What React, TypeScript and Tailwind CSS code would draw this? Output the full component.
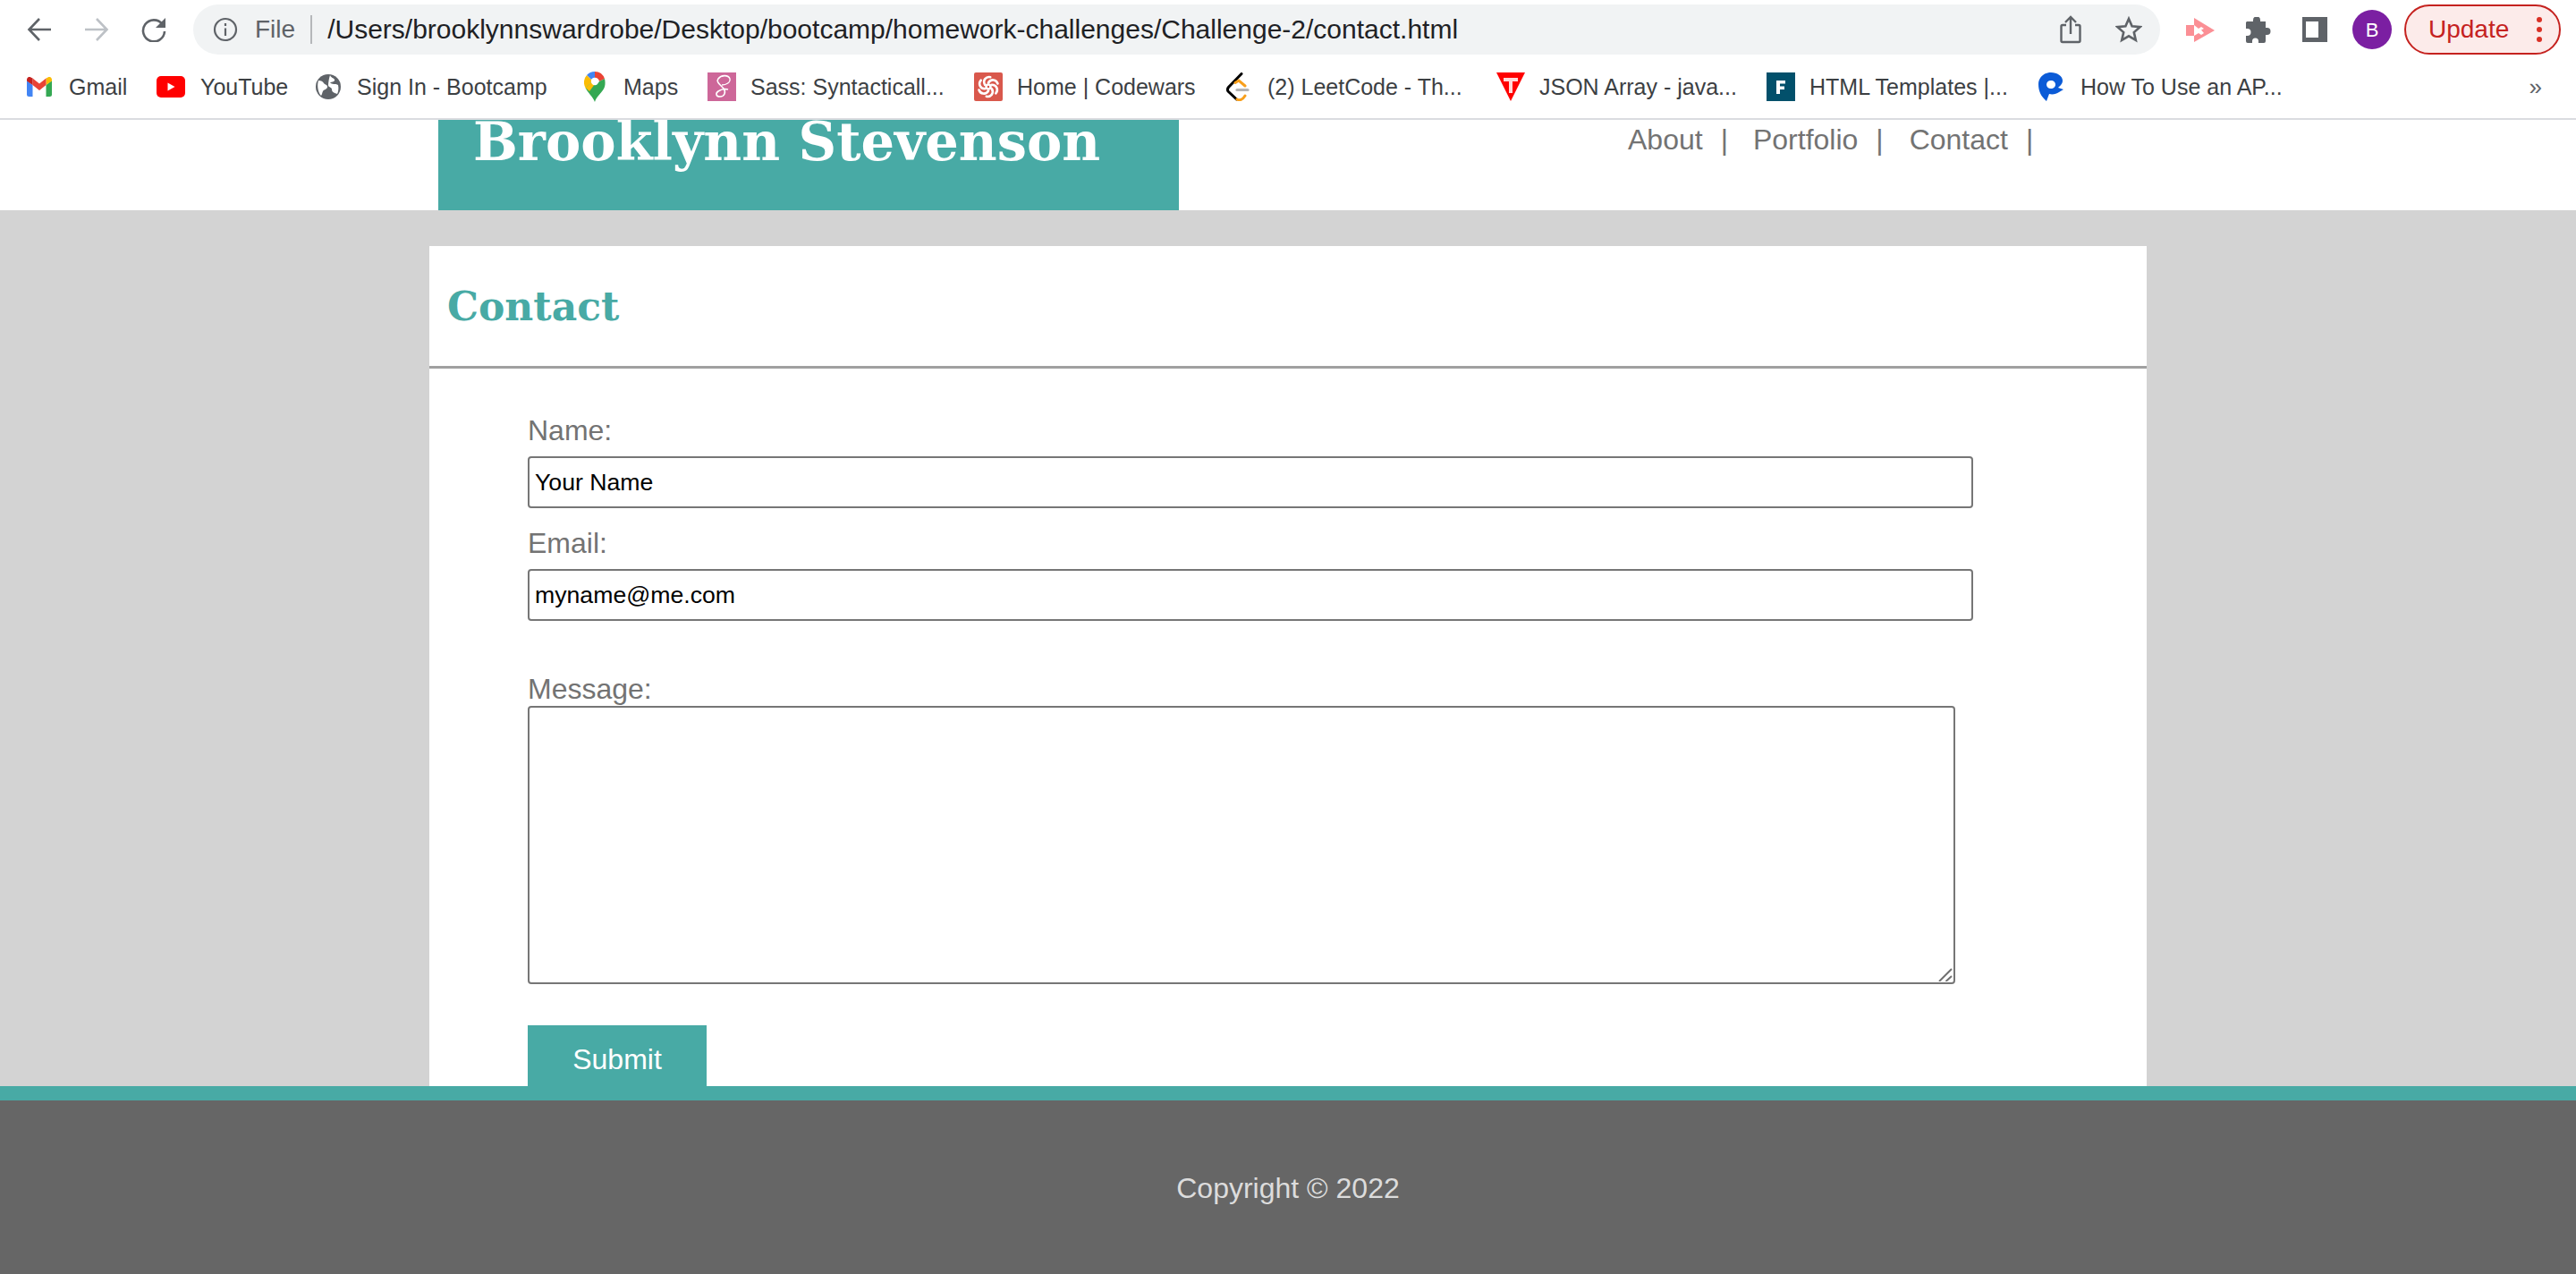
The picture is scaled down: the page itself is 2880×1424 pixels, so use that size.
import React from 'react'

const sans = 'font-["Liberation_Sans",Arial,sans-serif]'

const GmailIcon = () => (
  <svg viewBox="0 0 28 22" className="w-[28px] h-[22px]">
    <path d="M0 4v15.500A2.500 2.500 0 0 0 2.500 22H6.500V9z" fill="#4285f4" />
    <path d="M28 4v15.500a2.500 2.500 0 0 1-2.500 2.500H21.500V9z" fill="#34a853" />
    <path d="M21.500 1.500V9L28 4.500V3c0-2.500-2.800-3.800-4.500-2.600z" fill="#fbbc04" />
    <path d="M6.500 9V1.500L14 7.500l7.500-6V9L14 15z" fill="#ea4335" />
    <path d="M0 3v1.500L6.500 9V1.500L4.500.4C2.800-.8 0 .5 0 3z" fill="#c5221f" />
  </svg>
)

const YoutubeIcon = () => (
  <svg viewBox="0 0 32 24" className="w-[32px] h-[24px]">
    <rect width="32" height="24" rx="5" fill="#ff0000" />
    <path d="M12.500 7.500v9l8-4.500z" fill="#fff" />
  </svg>
)

const GlobeIcon = () => (
  <svg viewBox="0 0 28 28" className="w-[28px] h-[28px]">
    <circle cx="14" cy="14" r="14" fill="#5f6368" />
    <path d="M3 7c3 0 5 1 6 3s4 1 4 4-4 3-5 5-1 4-2 5C3 21 1 13 3 7zM16 1c1 3 4 3 5 5s-3 3-5 3c2 3 6 1 9 3 1 4 0 8-1 10-3-1-6-2-6-5s-4-2-4-5 1-8 2-11z" fill="#fff" />
  </svg>
)

const MapsIcon = () => (
  <svg viewBox="0 0 24 34" className="w-[24px] h-[34px]">
    <path d="M12 0a12 12 0 0 0-9 4l5 5a5 5 0 0 1 4-2z" fill="#4285f4" />
    <path d="M12 0a12 12 0 0 1 11 8l-6 3a5 5 0 0 0-5-4z" fill="#ea4335" />
    <path d="M3 4A12 12 0 0 0 1.500 18l7-6a5 5 0 0 1-.5-3z" fill="#fbbc04" />
    <path d="M1.500 18c2.500 6 8 9 10.500 16 2-7 9-11 11-17 1-3 .5-7 0-9l-6 3a5 5 0 0 1-8.500 1z" fill="#34a853" />
    <path d="M1.500 18 8.500 12c1 1.500 2 2 3.500 2L6 22z" fill="#fbbc04" />
    <circle cx="12" cy="11" r="4.200" fill="#fff" />
  </svg>
)

const SassIcon = () => (
  <svg viewBox="0 0 32 32" className="w-[32px] h-[32px]">
    <rect width="32" height="32" fill="#cd6799" />
    <path d="M25 7c-2-5-10-4-13 0s3 7 6 11 1 9-4 9-5-4-2-6 8-3 11-2" fill="none" stroke="#fff" strokeWidth="1.600" />
    <path d="M25 7c1 4-4 7-9 7" fill="none" stroke="#fff" strokeWidth="1.300" />
  </svg>
)

const swirl = [0, 60, 120, 180, 240, 300]

const CodewarsIcon = () => (
  <svg viewBox="0 0 32 32" className="w-[32px] h-[32px]">
    <rect width="32" height="32" rx="2" fill="#d9584c" />
    <g fill="none" stroke="#fff" strokeWidth="2.600" strokeLinecap="round">
      <circle cx="16" cy="16" r="2.500" />
      {swirl.map((deg) => (
        <path key={deg} d="M16 11.500C19 6.500 25 8 26.500 12.500" transform={`rotate(${deg} 16 16)`} />
      ))}
    </g>
  </svg>
)

const LeetIcon = () => (
  <svg viewBox="0 0 26 32" className="w-[26px] h-[32px]">
    <path d="M17 1.500 2.500 16.500c-1.500 2-1.500 3.500 0 5l9 8.500" fill="none" stroke="#000" strokeWidth="3" strokeLinecap="round" />
    <path d="M10 11.500 14 9l7 6M12 30c3 1.500 6 1 9-4" fill="none" stroke="#f89f1b" strokeWidth="3" strokeLinecap="round" />
    <path d="M12 19.500h12" stroke="#b3b3b3" strokeWidth="3.200" strokeLinecap="round" />
  </svg>
)

const TriangleIcon = () => (
  <svg viewBox="0 0 32 32" className="w-[32px] h-[32px]">
    <path d="M0 0h32L16 32z" fill="#ff0000" />
    <path d="M8 6h16v4h-6v13h-4V10H8z" fill="#fff" opacity=".85" />
  </svg>
)

const FIcon = () => (
  <svg viewBox="0 0 32 32" className="w-[32px] h-[32px]">
    <rect width="32" height="32" fill="#02506b" />
    <path d="M11 9h10v3.500h-6v3h5V19h-5v5h-4z" fill="#fff" />
  </svg>
)

const QIcon = () => (
  <svg viewBox="0 0 28 32" className="w-[28px] h-[32px]">
    <path d="M14 0C6 0 0 6 0 13c0 8 3 14 9 19l3-8c4 1 8 0 11-2l5-3-6-2c2-2 5-4 5-8C27 4 21 0 14 0zm0 9c3 0 5 2 5 4.500S17 18 14 18s-5-2-5-4.500S11 9 14 9z" fill="#0b5bd7" />
  </svg>
)

const bookmarks = [
  { label: 'Gmail', icon: <GmailIcon />, box: 'w-[28px] ml-[30px]', text: 'w-[62px] ml-[19px]' },
  { label: 'YouTube', icon: <YoutubeIcon />, box: 'w-[32px] ml-[36px]', text: 'w-[93px] ml-[17px]' },
  { label: 'Sign In - Bootcamp', icon: <GlobeIcon />, box: 'w-[28px] ml-[36px]', text: 'w-[216px] ml-[18px]' },
  { label: 'Maps', icon: <MapsIcon />, box: 'w-[24px] ml-[38px]', text: 'w-[61px] ml-[20px]' },
  { label: 'Sass: Syntacticall...', icon: <SassIcon />, box: 'w-[32px] ml-[33px]', text: 'w-[218px] ml-[16px]' },
  { label: 'Home | Codewars', icon: <CodewarsIcon />, box: 'w-[32px] ml-[32px]', text: 'w-[199px] ml-[16px]' },
  { label: '(2) LeetCode - Th...', icon: <LeetIcon />, box: 'w-[26px] ml-[35px]', text: 'w-[222px] ml-[20px]' },
  { label: 'JSON Array - java...', icon: <TriangleIcon />, box: 'w-[32px] ml-[34px]', text: 'w-[220px] ml-[16px]' },
  { label: 'HTML Templates |...', icon: <FIcon />, box: 'w-[32px] ml-[34px]', text: 'w-[222px] ml-[16px]' },
  { label: 'How To Use an AP...', icon: <QIcon />, box: 'w-[28px] ml-[34px]', text: 'w-[223px] ml-[19px]' },
]

const BrowserChrome = () => (
  <div className={`${sans} bg-white border-b-2 border-[#dadce0]`}>
    <div className="h-[66px] flex items-center">
      <svg viewBox="0 0 28 28" className="w-[28px] h-[28px] ml-[30px]" fill="none" stroke="#5f6368" strokeWidth="2.600">
        <path d="M27 14H3M14 2 2.500 14 14 26" />
      </svg>
      <svg viewBox="0 0 28 28" className="w-[28px] h-[28px] ml-[36px]" fill="none" stroke="#bdc1c6" strokeWidth="2.600">
        <path d="M1 14h24M14 2l11.500 12L14 26" />
      </svg>
      <svg viewBox="0 0 28 28" className="w-[28px] h-[28px] ml-[36px]" fill="none">
        <path d="M23.500 8A12 12 0 1 0 26 16" stroke="#5f6368" strokeWidth="2.600" />
        <path d="M27 1v11H16z" fill="#5f6368" />
      </svg>
      <div className="ml-[30px] w-[2199px] h-[56px] rounded-full bg-[#f1f3f4] flex items-center">
        <svg viewBox="0 0 28 28" className="w-[28px] h-[28px] ml-[22px]" fill="none" stroke="#5f6368" strokeWidth="2.200">
          <circle cx="14" cy="14" r="12" />
          <path d="M14 12.500V21M14 7v3" />
        </svg>
        <span className="ml-[19px] text-[28px] leading-none text-[#5f6368]">File</span>
        <span className="ml-[17px] w-[2px] h-[32px] bg-[#b5b7ba]" />
        <span className="ml-[17px] text-[30px] leading-none text-[#202124]">
          /Users/brooklynnswardrobe/Desktop/bootcamp/homework-challenges/Challenge-2/contact.html
        </span>
        <svg viewBox="0 0 24 32" className="w-[24px] h-[32px] ml-auto" fill="none" stroke="#5f6368" strokeWidth="2.400">
          <path d="M7 11H3a1.500 1.500 0 0 0-1.500 1.500v16A1.500 1.500 0 0 0 3 30h18a1.500 1.500 0 0 0 1.500-1.500v-16A1.500 1.500 0 0 0 21 11h-4M12 21V2M6 8l6-6 6 6" />
        </svg>
        <svg viewBox="0 0 30 30" className="w-[30px] h-[30px] ml-[38px] mr-[20px]" fill="none" stroke="#5f6368" strokeWidth="2.600">
          <path d="m15 3 3.600 8.300 9 .8-6.800 6 2 8.800-7.800-4.600-7.800 4.600 2-8.800-6.800-6 9-.8z" />
        </svg>
      </div>
      <svg viewBox="0 0 32 27" className="w-[32px] h-[27px] ml-[29px]">
        <path d="M0 8h9v12H0z" fill="#fb8f95" />
        <path d="M9 0l23 14L9 27v-7l5-3 3 2 3-2-3-3.500L20 12l-3-2-3 2-5-4z" fill="#fb8f95" />
      </svg>
      <svg viewBox="0 0 29 29" className="w-[29px] h-[29px] ml-[34px]">
        <path d="M2 5h7V3.500a4 4 0 0 1 8 0V5h6v7h1.500a4 4 0 0 1 0 8H23v7a2 2 0 0 1-2 2h-6v-2a3.500 3.500 0 0 0-7 0v2H3a2 2 0 0 1-2-2v-6h1.500a4 4 0 0 0 0-8H1V6z" fill="#5f6368" />
      </svg>
      <svg viewBox="0 0 28 28" className="w-[28px] h-[28px] ml-[35px]">
        <path d="M0 0h28v28H0zM4 5v18h14V5z" fill="#5f6368" fillRule="evenodd" />
      </svg>
      <div className="ml-[28px] w-[44px] h-[44px] rounded-full bg-[#7b1fa2] text-white text-[22px] flex items-center justify-center">
        B
      </div>
      <div className="ml-[14px] w-[175px] h-[56px] rounded-full border-2 border-[#c5221f] bg-[#fcebea] flex items-center text-[#c5221f]">
        <span className="ml-[25px] text-[28px] leading-none">Update</span>
        <span className="ml-[31px] flex flex-col gap-[5px]">
          <span className="w-[6px] h-[6px] rounded-full bg-[#d93025]" />
          <span className="w-[6px] h-[6px] rounded-full bg-[#d93025]" />
          <span className="w-[6px] h-[6px] rounded-full bg-[#d93025]" />
        </span>
      </div>
    </div>
    <div className="h-[66px] flex items-center pb-[4px]">
      {bookmarks.map((b) => (
        <React.Fragment key={b.label}>
          <span className={`${b.box} flex justify-center shrink-0`}>{b.icon}</span>
          <span className={`${b.text} text-[25px] leading-none text-[#3c4043] whitespace-nowrap shrink-0`}>{b.label}</span>
        </React.Fragment>
      ))}
      <span className="ml-auto mr-[38px] text-[26px] leading-none text-[#5f6368]">»</span>
    </div>
  </div>
)

const Header = () => (
  <header className="h-[101px] bg-white flex overflow-hidden shrink-0">
    <div className="ml-[490px] w-[828px] bg-[#48aaa5]">
      <h1 className='-mt-[14px] ml-[39px] font-["DejaVu_Serif",Georgia,serif] font-bold text-[59px] leading-[78px] text-white whitespace-nowrap'>
        Brooklynn Stevenson
      </h1>
    </div>
    <nav className="ml-[502px] pt-[4px] flex text-[32px] leading-[37px] text-[#737373] whitespace-nowrap">
      <span>About</span>
      <span className="ml-[20px]">|</span>
      <span className="ml-[28px]">Portfolio</span>
      <span className="ml-[20px]">|</span>
      <span className="ml-[29px]">Contact</span>
      <span className="ml-[20px]">|</span>
    </nav>
  </header>
)

const ContactCard = () => (
  <main className="flex-1 bg-[#d3d3d3] pt-[40px] min-h-0">
    <div className="ml-[480px] w-[1920px] h-[939px] bg-white overflow-hidden">
      <h2 className='h-[134px] pl-[20px] pt-[38px] font-["DejaVu_Serif",Georgia,serif] font-bold text-[44px] leading-[60px] text-[#48aaa5]'>
        Contact
      </h2>
      <div className="h-[3px] bg-[#a0a0a0]" />
      <form className="pl-[110px] pt-[51px] text-[32px] leading-[37px] text-[#737373]">
        <label className="block mb-[10px]">Name:</label>
        <input
          defaultValue="Your Name"
          className="block w-[1616px] h-[58px] px-[6px] border-2 border-[#767676] rounded-[4px] text-[26.670px] text-black"
        />
        <label className="block mt-[21px] mb-[10px]">Email:</label>
        <input
          defaultValue="myname@me.com"
          className="block w-[1616px] h-[58px] px-[6px] border-2 border-[#767676] rounded-[4px] text-[26.670px] text-black"
        />
        <label className="block mt-[58px]">Message:</label>
        <div className="relative w-[1596px] h-[311px]">
          <textarea className="block w-full h-full resize-none border-2 border-[#767676] rounded-[4px]" />
          {/* resize grip */}
          <svg viewBox="0 0 18 18" className="absolute right-[3px] bottom-[3px] w-[18px] h-[18px]" stroke="#707070" strokeWidth="2">
            <path d="M17 4 3 18M17 12l-6.500 6" />
          </svg>
        </div>
        <button type="button" className="block mt-[46px] w-[200px] h-[68px] pt-[8px] bg-[#48aaa5] text-white text-center leading-[37px]">
          Submit
        </button>
      </form>
    </div>
  </main>
)

const Footer = () => (
  <footer className="shrink-0 h-[210px] pt-[2px] border-t-[16px] border-[#48aaa5] bg-[#666666] flex items-center justify-center text-[32px] text-[#dcdcdc]">
    Copyright © 2022
  </footer>
)

export default function App() {
  return (
    <div className={`${sans} h-[1424px] flex flex-col overflow-hidden`}>
      <BrowserChrome />
      <Header />
      <ContactCard />
      <Footer />
    </div>
  )
}
